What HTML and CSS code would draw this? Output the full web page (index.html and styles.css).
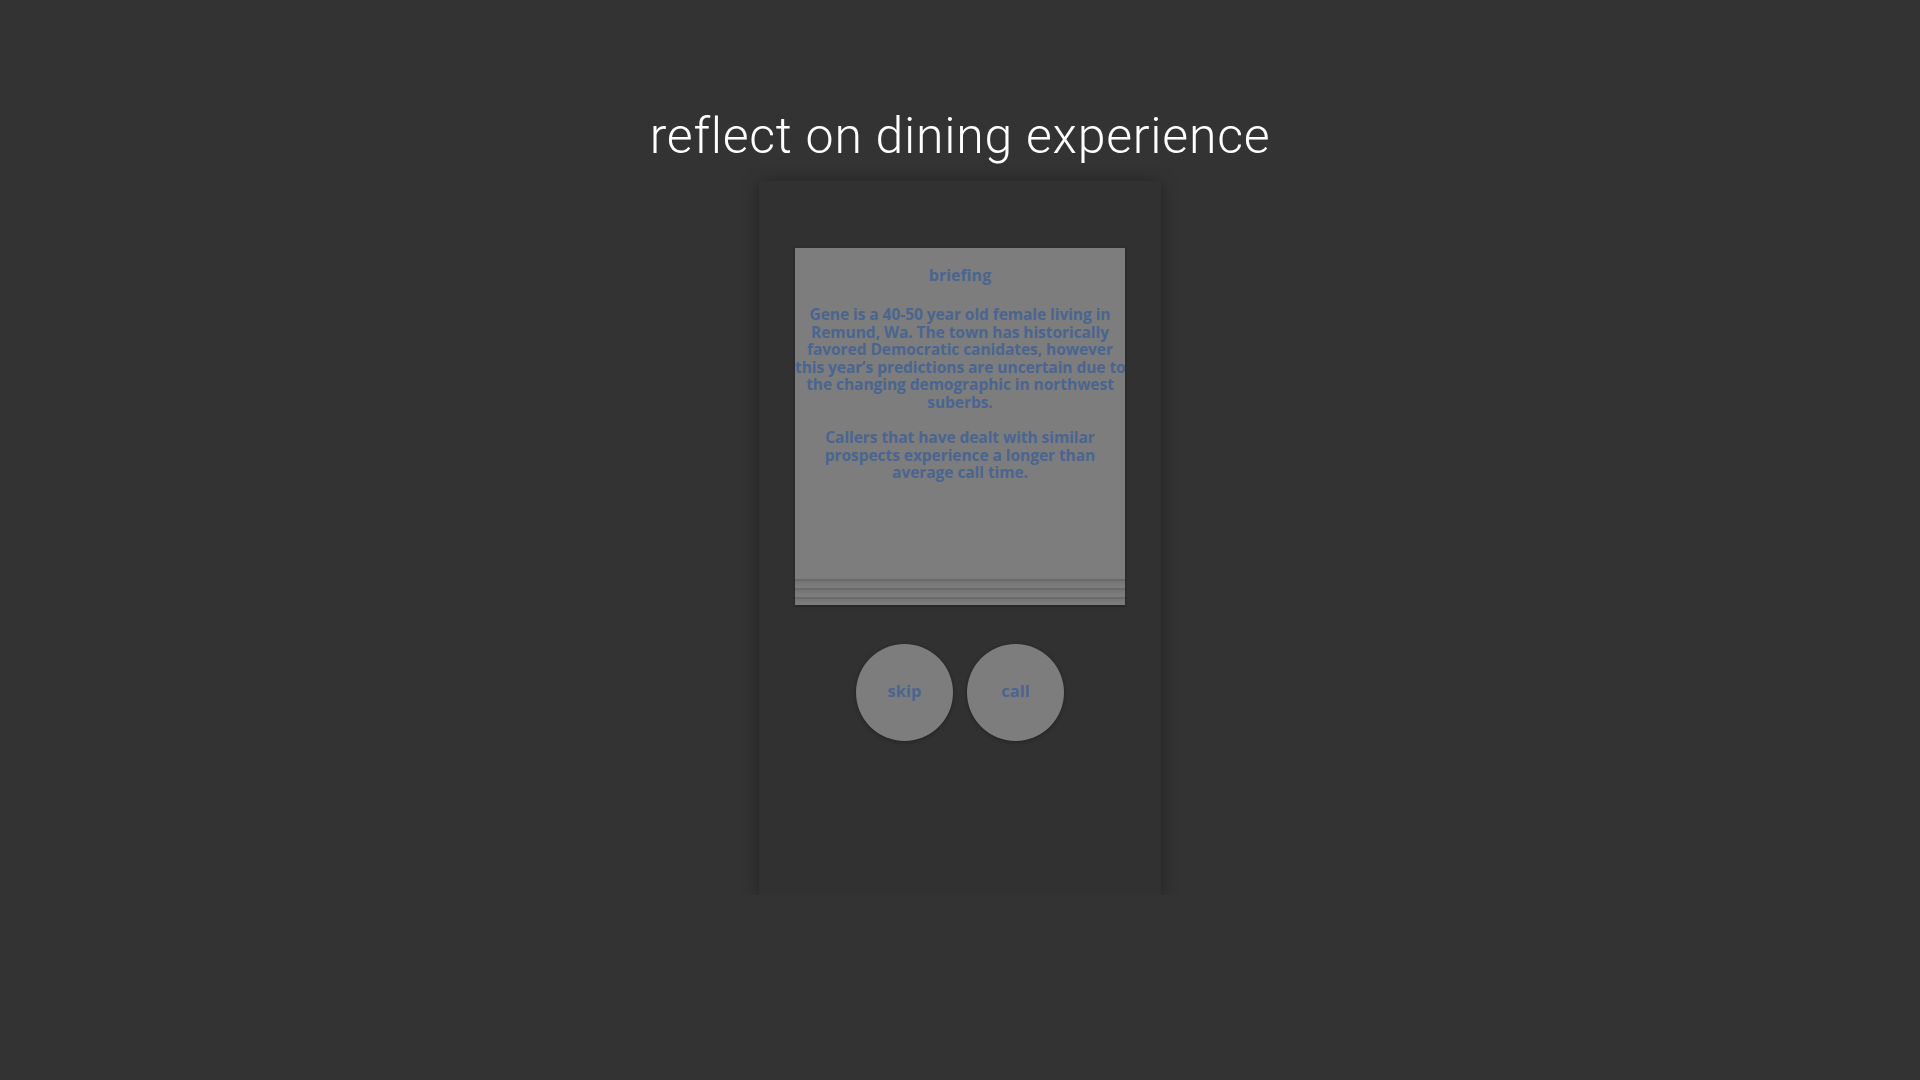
FILE: index.html
```html
<!DOCTYPE html>
<html>
<head>
<meta charset="utf-8">
<link rel="stylesheet" href="styles.css">
</head>
<body>
<main class="page">
  <h1 class="title">reflect on dining experience</h1>
  <section class="phone">
    <div class="briefing">
      <div class="briefing-body">
        <h2 class="briefing-title">briefing</h2>
        <p class="briefing-text">Gene is a 40-50 year old female living in<br>Remund, Wa. The town has historically<br>favored Democratic canidates, however<br>this year’s predictions are uncertain due to<br>the changing demographic in northwest<br>suberbs.</p>
        <p class="briefing-text">Callers that have dealt with similar<br>prospects experience a longer than<br>average call time.</p>
      </div>
      <div class="stack-edge"></div>
      <div class="stack-edge"></div>
      <div class="stack-edge"></div>
    </div>
    <div class="actions">
      <button class="round-btn">skip</button>
      <button class="round-btn">call</button>
    </div>
  </section>
</main>
</body>
</html>
```

FILE: styles.css
```css
html, body {
  margin: 0;
  padding: 0;
  background: #333333;
}

.page {
  display: flex;
  flex-direction: column;
  align-items: center;
  padding-top: 106px;
}

.title {
  margin: 0;
  font-family: Roboto, "Liberation Sans", sans-serif;
  font-weight: 300;
  font-size: 50px;
  line-height: 60px;
  color: #ffffff;
  letter-spacing: 0.75px;
}

.phone {
  margin-top: 15px;
  width: 402px;
  height: 714px;
  box-sizing: border-box;
  background: #313131;
  box-shadow: 0 2px 16px rgba(0, 0, 0, 0.35);
  display: flex;
  flex-direction: column;
  align-items: center;
  padding-top: 67px;
}

.briefing {
  width: 330px;
  height: 357px;
  box-sizing: border-box;
  background: #7d7d7d;
  box-shadow: 0 1px 3px rgba(0, 0, 0, 0.35);
  display: flex;
  flex-direction: column;
}

.briefing-body {
  flex: 1;
  padding-top: 18px;
  text-align: center;
  font-family: "Open Sans", Lato, sans-serif;
  font-weight: 700;
  color: #4a6590;
  white-space: nowrap;
}

.briefing-title {
  margin: 0 0 22px;
  font-size: 16px;
  line-height: 18px;
  font-weight: 700;
}

.briefing-text {
  margin: 0 0 17.6px;
  font-size: 15.6px;
  line-height: 17.6px;
  letter-spacing: -0.1px;
}

.stack-edge {
  height: 9px;
  border-top: 2px solid #6a6a6a;
  box-sizing: border-box;
  background: linear-gradient(#747474, #7b7b7b 60%, #7d7d7d);
}

.stack-edge:last-child {
  height: 8px;
}

.actions {
  margin-top: 39px;
  display: flex;
  gap: 14px;
}

.round-btn {
  width: 97px;
  height: 97px;
  border-radius: 50%;
  border: none;
  padding: 0 0 4px;
  background: #7d7d7d;
  box-shadow: 0 1px 4px rgba(0, 0, 0, 0.3);
  font-family: "Open Sans", Lato, sans-serif;
  font-weight: 700;
  font-size: 16.5px;
  color: #4a6590;
}
```
